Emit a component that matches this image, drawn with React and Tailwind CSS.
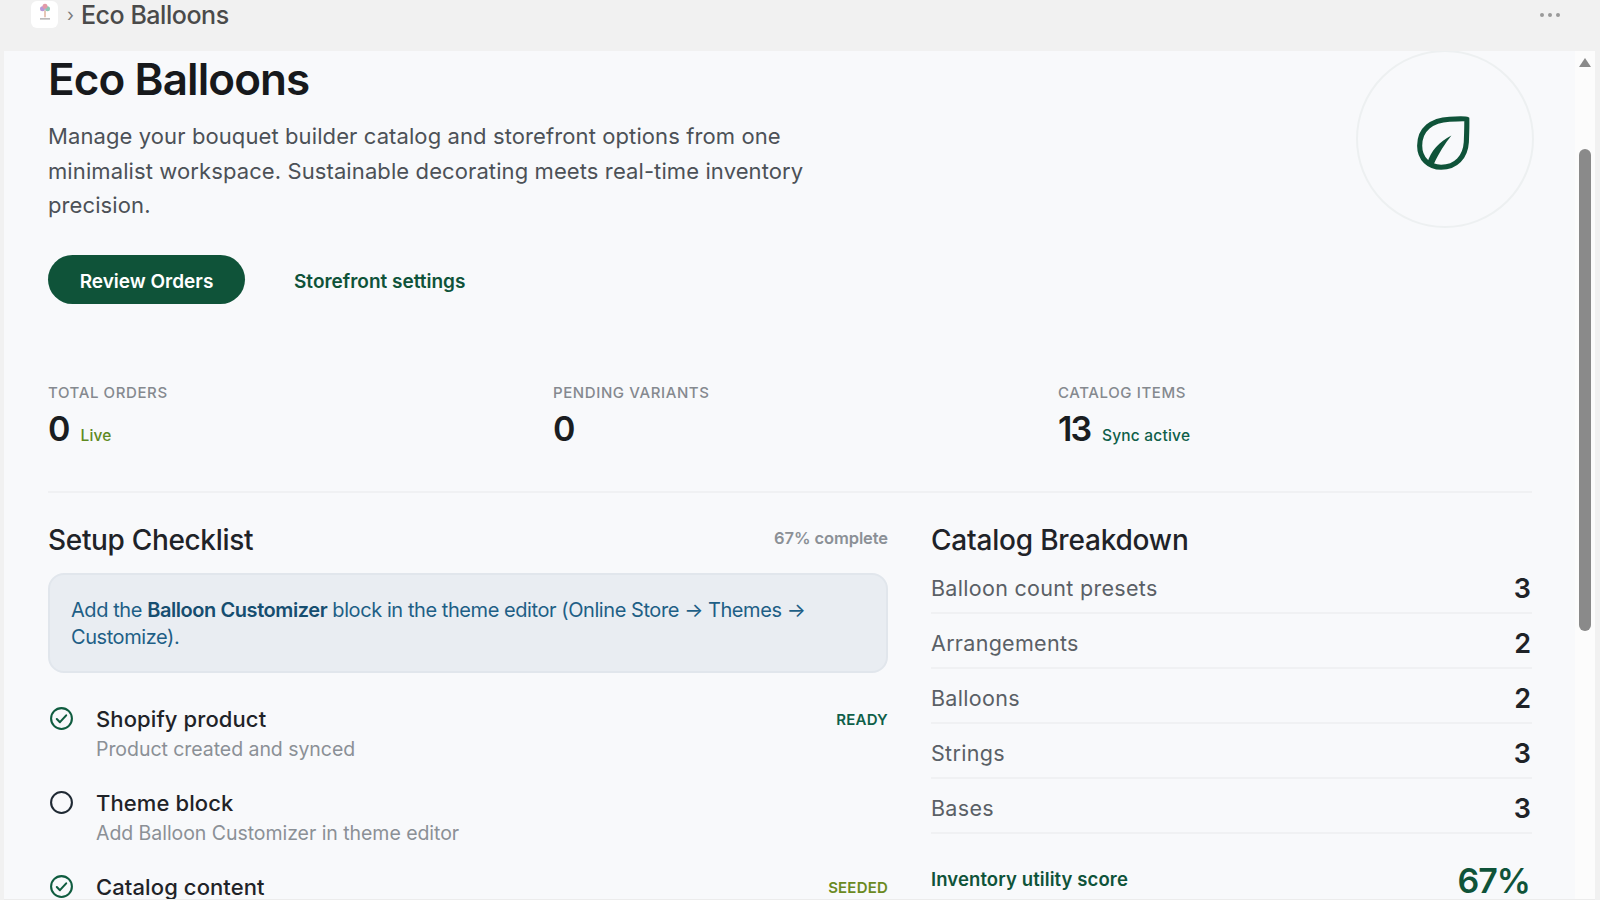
function Check() {
  return (
    <svg viewBox="0 0 24 24" className="w-[25px] h-[25px] shrink-0 text-[#0f5c3f]" fill="none" stroke="currentColor" strokeWidth="2" strokeLinecap="round" strokeLinejoin="round">
      <circle cx="12" cy="12" r="10" />
      <path d="M7.500 12.500l3 3 6-6.500" />
    </svg>
  );
}
function Ring() {
  return (
    <svg viewBox="0 0 24 24" className="w-[25px] h-[25px] shrink-0 text-[#1f2933]" fill="none" stroke="currentColor" strokeWidth="2">
      <circle cx="12" cy="12" r="10" />
    </svg>
  );
}
function Item({ icon, title, sub, tag, tagClass }) {
  return (
    <div className="flex items-start gap-[22px] h-[84px] pl-[1px]">
      {icon}
      <div className="flex-1 -mt-[1px]">
        <div className="text-[22px] leading-[28px] font-medium text-[#1f2328] tracking-[0.1px]">{title}</div>
        {sub && <div className="mt-[1px] text-[19.500px] leading-[30px] text-[#8b9096] tracking-[-0.05px]">{sub}</div>}
      </div>
      {tag && <div className={`text-[15px] leading-[28px] font-semibold tracking-[0.2px] ${tagClass}`}>{tag}</div>}
    </div>
  );
}
function Row({ label, value }) {
  return (
    <div className="flex items-center justify-between h-[55px] pt-[6px] border-b-2 border-[#f0f1f3]">
      <span className="text-[21.500px] text-[#5a6066] tracking-[0.3px]">{label}</span>
      <span className="text-[27px] font-semibold text-[#1f2328] pr-[1px] pt-[1px]">{value}</span>
    </div>
  );
}
function Stat({ label, value, note, noteClass }) {
  return (
    <div>
      <div className="text-[15px] leading-[20px] font-medium text-[#85898f] tracking-[0.6px]">{label}</div>
      <div className="flex items-baseline gap-[12px] mt-[4px] h-[44px]">
        <span className="text-[34px] leading-[44px] font-semibold text-[#1a1d21] tracking-[-2px]">{value}</span>
        {note && <span className={`text-[15.500px] font-medium tracking-[0.2px] ${noteClass}`}>{note}</span>}
      </div>
    </div>
  );
}
export default function App() {
  return (
    <div className="w-[1600px] h-[900px] overflow-hidden bg-[#f1f1f1] flex flex-col" style={{ fontFamily: '"Inter", "Liberation Sans", sans-serif' }}>
      <header className="h-[51px] shrink-0 flex items-center pl-[31px] pr-[40px]">
        <div className="w-[27px] h-[27px] -mt-[22px] bg-white rounded-[6px] flex items-start justify-center pt-[2px]">
          <svg viewBox="0 0 24 24" className="w-[20px] h-[20px]">
            <circle cx="9" cy="7" r="3" fill="#b79ad8" />
            <circle cx="15" cy="7" r="3" fill="#8cc8b4" />
            <circle cx="12" cy="4" r="3" fill="#e39aa8" />
            <path d="M12 9v8" stroke="#d9a58c" strokeWidth="1.500" />
            <rect x="6" y="18" width="12" height="2" fill="#bbb" />
          </svg>
        </div>
        <span className="ml-[9px] -mt-[22px] text-[18px] text-[#7a7a7a]">›</span>
        <span className="ml-[7px] -mt-[22px] text-[25px] leading-[30px] font-medium text-[#4a4a4a] tracking-[-0.450px]">Eco Balloons</span>
        <div className="ml-auto -mt-[21px] flex gap-[4px]">
          <i className="w-[4px] h-[4px] rounded-full bg-[#9a9a9a]" />
          <i className="w-[4px] h-[4px] rounded-full bg-[#9a9a9a]" />
          <i className="w-[4px] h-[4px] rounded-full bg-[#9a9a9a]" />
        </div>
      </header>
      <div className="flex-1 flex ml-[4px] mr-[5px] min-h-0 border-b border-[#ececec]">
        <main className="flex-1 bg-[#f8f9fb] pl-[44px] pr-[43px] overflow-hidden">
          <div className="flex justify-between items-start">
            <div className="w-[790px]">
              <h1 className="text-[44px] leading-[56px] font-semibold text-[#17191c] tracking-[-0.9px]">Eco Balloons</h1>
              <p className="mt-[12px] text-[22px] leading-[34.700px] text-[#4c5157] tracking-[0.1px]">
                Manage your bouquet builder catalog and storefront options from one minimalist workspace. Sustainable decorating meets real-time inventory precision.
              </p>
              <div className="flex items-center gap-[49px] mt-[32px]">
                <button className="w-[197px] h-[49px] rounded-full bg-[#0f5339] text-white text-[19px] font-semibold pt-[5px]">Review Orders</button>
                <a className="text-[19px] font-semibold text-[#0f5339] pt-[6px]">Storefront settings</a>
              </div>
            </div>
            <div className="w-[178px] h-[178px] -mt-[1px] rounded-full border-2 border-[#edf0f1] flex items-center justify-center mr-[-2px]">
              <svg viewBox="0 0 60 60" className="w-[56px] h-[56px] -ml-[4px] mt-[8px]" fill="none">
                <path d="M55.500 4.500C55 4.200 46 4 37 4.500 18 5.500 5 15 5 33c0 14 10 23 23 23 16 0 26-11 27-27 .3-8 .7-17 .5-24.500z" stroke="#0f5339" strokeWidth="5.500" />
                <path d="M13 52C17 38 26 29 39 22 32 31 26 40 20 53z" fill="#0f5339" />
              </svg>
            </div>
          </div>
          <div className="grid grid-cols-[505px_505px_1fr] mt-[79px] h-[110px] border-b-2 border-[#f0f1f3] w-[1484px]">
            <Stat label="TOTAL ORDERS" value="0" note="Live" noteClass="text-[#5f8a1f]" />
            <Stat label="PENDING VARIANTS" value="0" />
            <Stat label="CATALOG ITEMS" value="13" note="Sync active" noteClass="text-[#0f5f49]" />
          </div>
          <div className="flex gap-[43px] mt-[27px] w-[1484px]">
            <section className="w-[840px]">
              <div className="flex items-center justify-between h-[40px]">
                <h2 className="text-[28px] leading-[40px] font-medium text-[#1f2328] tracking-[-0.330px]">Setup Checklist</h2>
                <span className="-mt-[3px] text-[16.500px] font-semibold text-[#8b9096] tracking-[-0.1px]">67% complete</span>
              </div>
              <div className="mt-[13px] h-[100px] rounded-[16px] bg-[#e9edf2] border-2 border-[#e1e6ec] px-[21px] pt-[22px] text-[20px] leading-[26.500px] text-[#1e5f86] tracking-[-0.430px]">
                Add the <b className="font-semibold text-[#164e70]">Balloon Customizer</b> block in the theme editor (Online Store → Themes → Customize).
              </div>
              <div className="mt-[33px]">
                <Item icon={<Check />} title="Shopify product" sub="Product created and synced" tag="READY" tagClass="text-[#0f5f49]" />
                <Item icon={<Ring />} title="Theme block" sub="Add Balloon Customizer in theme editor" />
                <Item icon={<Check />} title="Catalog content" tag="SEEDED" tagClass="text-[#6b8a1f]" />
              </div>
            </section>
            <section className="w-[601px]">
              <h2 className="h-[40px] text-[28px] leading-[40px] font-medium text-[#1f2328] tracking-[-0.200px]">Catalog Breakdown</h2>
              <div className="-mt-[1px]">
                <Row label="Balloon count presets" value="3" />
                <Row label="Arrangements" value="2" />
                <Row label="Balloons" value="2" />
                <Row label="Strings" value="3" />
                <Row label="Bases" value="3" />
              </div>
              <div className="flex items-center justify-between mt-[24px] h-[44px]">
                <span className="text-[18.500px] font-semibold text-[#0f5339] tracking-[0.1px]">Inventory utility score</span>
                <span className="text-[34px] font-semibold text-[#0f5339] tracking-[-1px] pr-[2px]">67%</span>
              </div>
            </section>
          </div>
        </main>
        <aside className="w-[20px] bg-[#fcfcfc] flex flex-col items-center pt-[7px] shrink-0">
          <div className="w-0 h-0 border-l-[6px] border-r-[6px] border-b-[9px] border-l-transparent border-r-transparent border-b-[#8a8a8a]" />
          <div className="w-[12px] h-[482px] mt-[82px] rounded-full bg-[#8a8a8a]" />
        </aside>
      </div>
    </div>
  );
}
